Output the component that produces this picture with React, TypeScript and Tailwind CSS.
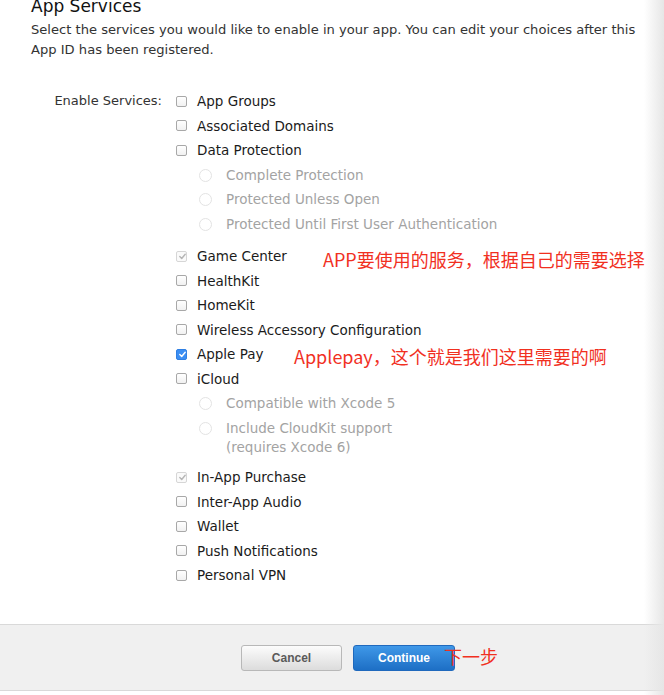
import React from "react";

const font = { fontFamily: '"DejaVu Sans", sans-serif' };
const cjk = { fontFamily: '"Noto Sans CJK SC", "Noto Sans", sans-serif' };

function Check({ color }: { color: string }) {
  return (
    <svg width="9" height="9" viewBox="0 0 9 9" className="absolute left-[0.5px] top-[0.5px]">
      <path d="M1.8 4.6 L3.7 6.5 L7.2 2.2" fill="none" stroke={color} strokeWidth="1.4" strokeLinecap="round" strokeLinejoin="round" />
    </svg>
  );
}

function Box({ state }: { state: "off" | "on" | "dis" }) {
  if (state === "on")
    return (
      <span className="relative block w-[11px] h-[11px] rounded-[2px] border border-[#2f7fe3] bg-[#3b8ef3] shrink-0">
        <Check color="#ffffff" />
      </span>
    );
  if (state === "dis")
    return (
      <span className="relative block w-[11px] h-[11px] rounded-[2px] border border-[#d6d6d6] bg-[#fafafa] shrink-0">
        <Check color="#b5b5b5" />
      </span>
    );
  return <span className="block w-[11px] h-[11px] rounded-[2px] border border-[#a8a8a8] bg-gradient-to-b from-white to-[#f1f1f1] shrink-0" />;
}

function Row({ label, state = "off", note, noteLeft, noteTop }: { label: string; state?: "off" | "on" | "dis"; note?: string; noteLeft?: string; noteTop?: string }) {
  return (
    <div className="relative flex items-center h-[24.5px]">
      <Box state={state} />
      <span className="ml-[10px] text-[13.5px] text-[#1b1b1b] whitespace-nowrap">{label}</span>
      {note && (
        <span className={`absolute whitespace-nowrap text-[18px] leading-[24px] text-[#f1301f] ${noteLeft} ${noteTop}`} style={cjk}>
          {note}
        </span>
      )}
    </div>
  );
}

function Radio({ label, second }: { label: string; second?: string }) {
  return (
    <div className="flex items-start pl-[23px]">
      <span className="block mt-[6px] w-[13px] h-[13px] rounded-full border border-[#e3e3e3] bg-white shrink-0" />
      <div className="ml-[14px] text-[13.5px] text-[#a3a3a3] whitespace-nowrap">
        <div className="leading-[24.5px]">{label}</div>
        {second && <div className="leading-[15px]">{second}</div>}
      </div>
    </div>
  );
}

export default function App() {
  return (
    <div className="relative w-[664px] h-[695px] overflow-hidden bg-white" style={font}>
      <div className="flex flex-col h-full">
        <div className="pl-[31px] h-[624px]">
          <div className="text-[17px] leading-[20px] text-[#111] -mt-[4px]">App Services</div>
          <div className="mt-[4px] text-[13.1px] leading-[20px] text-[#333] w-[620px]">
            Select the services you would like to enable in your app. You can edit your choices after this App ID has been registered.
          </div>
          <div className="flex mt-[29px]">
            <div className="w-[131px] text-right text-[13px] text-[#333] leading-[24.5px] whitespace-nowrap">Enable Services:</div>
            <div className="ml-[14px] flex flex-col">
              <Row label="App Groups" />
              <Row label="Associated Domains" />
              <Row label="Data Protection" />
              <div className="mb-[8px]">
                <Radio label="Complete Protection" />
                <Radio label="Protected Unless Open" />
                <Radio label="Protected Until First User Authentication" />
              </div>
              <Row label="Game Center" state="dis" note="APP要使用的服务，根据自己的需要选择" noteLeft="left-[147px]" noteTop="top-[3px]" />
              <Row label="HealthKit" />
              <Row label="HomeKit" />
              <Row label="Wireless Accessory Configuration" />
              <Row label="Apple Pay" state="on" note="Applepay，这个就是我们这里需要的啊" noteLeft="left-[118px]" noteTop="top-[2px]" />
              <Row label="iCloud" />
              <div className="mb-[10px]">
                <Radio label="Compatible with Xcode 5" />
                <Radio label="Include CloudKit support" second="(requires Xcode 6)" />
              </div>
              <Row label="In-App Purchase" state="dis" />
              <Row label="Inter-App Audio" />
              <Row label="Wallet" />
              <Row label="Push Notifications" />
              <Row label="Personal VPN" />
            </div>
          </div>
        </div>
        <div className="relative h-[67px] border-t border-b border-[#d9d9d9] bg-[#f0f0f0] flex items-center pl-[241px] gap-[11px]">
          <button className="w-[101px] h-[26px] rounded-[3px] border border-[#b8b8b8] bg-gradient-to-b from-[#fcfcfc] to-[#dcdcdc] text-[12px] font-bold text-[#5a5a5a]" style={{ fontFamily: '"Liberation Sans", sans-serif' }}>
            Cancel
          </button>
          <button className="w-[102px] h-[26px] rounded-[3px] border border-[#1f69bd] bg-gradient-to-b from-[#3f98e8] to-[#1d6fc5] text-[12px] font-bold text-white" style={{ fontFamily: '"Liberation Sans", sans-serif' }}>
            Continue
          </button>
          <span className="absolute left-[444px] top-[19px] text-[18px] leading-[24px] text-[#f1301f]" style={cjk}>下一步</span>
        </div>
        <div className="flex-1 bg-white" />
      </div>
      <div className="pointer-events-none absolute top-0 right-0 h-full w-[20px] bg-gradient-to-r from-transparent to-[#e6e6e6]" />
    </div>
  );
}
